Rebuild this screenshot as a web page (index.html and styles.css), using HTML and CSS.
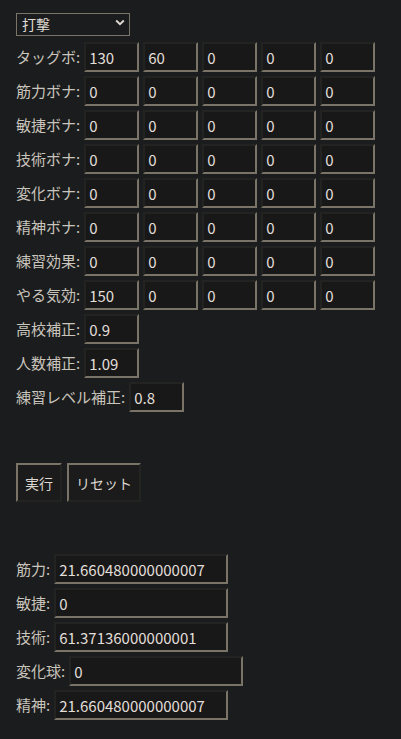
FILE: index.html
```html
<!DOCTYPE html>
<html lang="ja">
<head>
<meta charset="utf-8">
<title>練習計算</title>
<link rel="stylesheet" href="styles.css">
</head>
<body>
<div class="page">
  <div class="select-wrap">
    <select class="kind">
      <option>打撃</option>
    </select>
    <svg class="chev" width="10" height="7" viewBox="0 0 10 7"><path d="M1.2 1.5 L5 5.2 L8.8 1.5" fill="none" stroke="#e0dcd5" stroke-width="1.8"/></svg>
  </div>

  <div class="rows">
    <div class="row"><span class="lbl">タッグボ:</span><input class="num" value="130"><input class="num" value="60"><input class="num" value="0"><input class="num" value="0"><input class="num" value="0"></div>
    <div class="row"><span class="lbl">筋力ボナ:</span><input class="num" value="0"><input class="num" value="0"><input class="num" value="0"><input class="num" value="0"><input class="num" value="0"></div>
    <div class="row"><span class="lbl">敏捷ボナ:</span><input class="num" value="0"><input class="num" value="0"><input class="num" value="0"><input class="num" value="0"><input class="num" value="0"></div>
    <div class="row"><span class="lbl">技術ボナ:</span><input class="num" value="0"><input class="num" value="0"><input class="num" value="0"><input class="num" value="0"><input class="num" value="0"></div>
    <div class="row"><span class="lbl">変化ボナ:</span><input class="num" value="0"><input class="num" value="0"><input class="num" value="0"><input class="num" value="0"><input class="num" value="0"></div>
    <div class="row"><span class="lbl">精神ボナ:</span><input class="num" value="0"><input class="num" value="0"><input class="num" value="0"><input class="num" value="0"><input class="num" value="0"></div>
    <div class="row"><span class="lbl">練習効果:</span><input class="num" value="0"><input class="num" value="0"><input class="num" value="0"><input class="num" value="0"><input class="num" value="0"></div>
    <div class="row"><span class="lbl">やる気効:</span><input class="num" value="150"><input class="num" value="0"><input class="num" value="0"><input class="num" value="0"><input class="num" value="0"></div>
    <div class="row"><span class="lbl">高校補正:</span><input class="num" value="0.9"></div>
    <div class="row"><span class="lbl">人数補正:</span><input class="num" value="1.09"></div>
    <div class="row"><span class="lbl">練習レベル補正:</span><input class="num" value="0.8"></div>
  </div>

  <div class="buttons">
    <button class="btn">実行</button>
    <button class="btn">リセット</button>
  </div>

  <div class="rows results">
    <div class="row"><span class="lbl">筋力:</span><input class="out" value="21.660480000000007"></div>
    <div class="row"><span class="lbl">敏捷:</span><input class="out" value="0"></div>
    <div class="row"><span class="lbl">技術:</span><input class="out" value="61.37136000000001"></div>
    <div class="row"><span class="lbl">変化球:</span><input class="out" value="0"></div>
    <div class="row"><span class="lbl">精神:</span><input class="out" value="21.660480000000007"></div>
  </div>
</div>
</body>
</html>
```

FILE: styles.css
```css
html, body {
  margin: 0;
  padding: 0;
  background: #1b1c1d;
}
body {
  font-family: "Noto Sans CJK JP", "Noto Sans", sans-serif;
  color: #c9c4bc;
}
.page {
  padding: 11px 16px;
  display: flex;
  flex-direction: column;
  align-items: flex-start;
}
.select-wrap {
  position: relative;
  width: 114px;
  height: 23px;
}
.kind {
  -webkit-appearance: none;
  appearance: none;
  box-sizing: border-box;
  width: 114px;
  height: 23px;
  margin: 0;
  padding: 0 0 0 5px;
  border: 1px solid #7a7367;
  border-radius: 0;
  background: #1b1c1d;
  color: #e0dcd5;
  font-family: "Noto Sans CJK JP", sans-serif;
  font-size: 14px;
  line-height: 21px;
}
.chev {
  position: absolute;
  right: 5px;
  top: 8px;
  pointer-events: none;
}
.rows {
  display: flex;
  flex-direction: column;
  gap: 4px;
  margin-top: 8px;
}
.row {
  display: flex;
  align-items: center;
  gap: 4px;
  height: 30px;
}
.lbl {
  font-size: 15px;
  line-height: 20px;
  white-space: nowrap;
}
.num, .out {
  box-sizing: border-box;
  height: 30px;
  margin: 0;
  padding: 1px 3px;
  border: 2px solid;
  border-color: #232322 #7a7367 #7a7367 #232322;
  background: #181818;
  color: #e2ded8;
  font-family: "Noto Sans CJK JP", sans-serif;
  font-size: 15px;
  outline: none;
}
.num {
  width: 55px;
}
.out {
  width: 174px;
}
.buttons {
  display: flex;
  gap: 5px;
  margin-top: 51px;
}
.btn {
  box-sizing: border-box;
  height: 39px;
  margin: 0;
  padding: 0 7px;
  border: 2px solid;
  border-color: #7a7367 #232322 #232322 #7a7367;
  background: #1b1b1b;
  color: #dcd8d1;
  font-family: "Noto Sans CJK JP", sans-serif;
  font-size: 14px;
}
.results {
  margin-top: 52px;
}
```
